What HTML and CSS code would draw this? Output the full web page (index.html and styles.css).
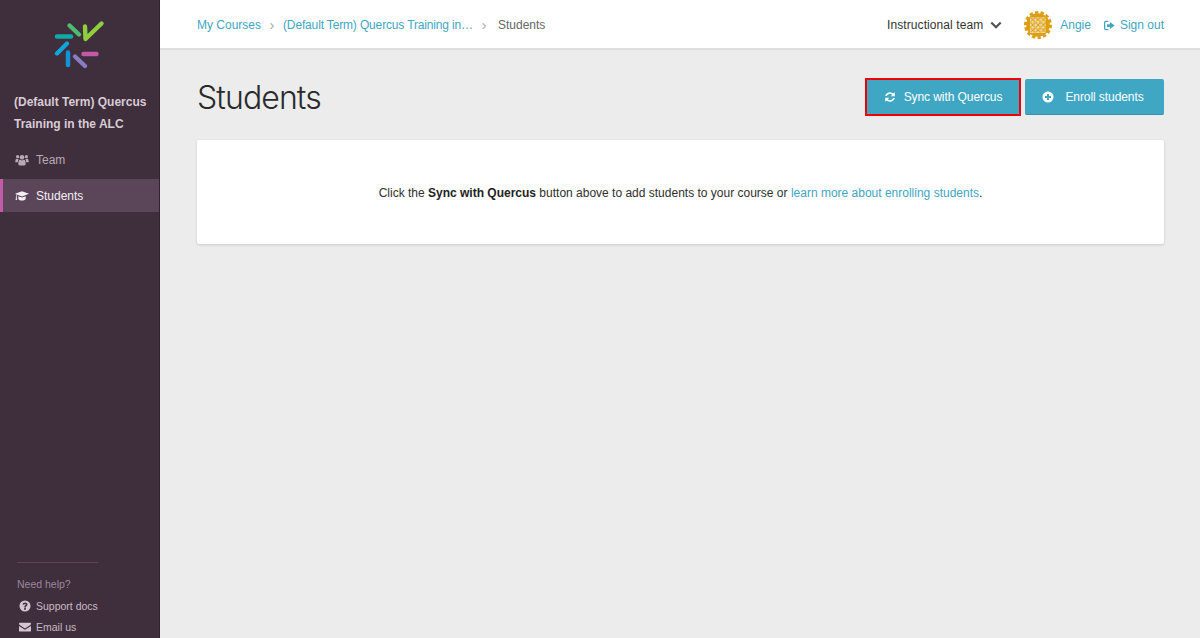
FILE: index.html
```html
<!DOCTYPE html>
<html lang="en">
<head>
    <meta charset="UTF-8">
    <meta name="viewport" content="width=device-width, initial-scale=1.0">
    <title>Students</title>
    <link rel="stylesheet" href="styles.css">
</head>
<body>

    <aside class="sidebar">
        <div class="logo">
            <svg width="50" height="50" viewBox="0 0 50 50" fill="none" stroke-width="4.4" stroke-linecap="round" stroke-linejoin="round">
                <path d="M2 11.500H16" stroke="#12aaa6"/>
                <path d="M14.500 0.500L24 9.500" stroke="#4fbb6f"/>
                <path d="M30 1.500L30.500 14L46.500 -1.500" stroke="#8fce3c"/>
                <path d="M12 18.500L2 28.500" stroke="#12a5dc"/>
                <path d="M13 27.500V40" stroke="#1096d8"/>
                <path d="M20 31.500L30 41" stroke="#8a7cc4"/>
                <path d="M28.500 29H41.500" stroke="#c45aa6"/>
            </svg>
        </div>
        <h2 class="course-title">(Default Term) Quercus Training in the ALC</h2>
        <nav class="side-nav">
            <a class="side-link">
                <svg class="side-icon" viewBox="0 0 16 14"><circle cx="8" cy="3.800" r="2.600"/><circle cx="3" cy="3.200" r="1.800"/><circle cx="13" cy="3.200" r="1.800"/><path d="M0.300 9.500C0.300 6.800 1 5.600 2.200 5.600C3 5.600 3.600 6.100 4.200 6.200C3.500 7.100 3.300 8.300 3.300 9.500H1.300C0.700 9.500 0.300 9.900 0.300 9.500ZM15.700 9.500C15.700 6.800 15 5.600 13.800 5.600C13 5.600 12.400 6.100 11.800 6.200C12.500 7.100 12.700 8.300 12.700 9.500H14.700C15.300 9.500 15.700 9.900 15.700 9.500Z"/><path d="M3.800 11.300C3.800 8.300 4.400 6.700 5.800 6.700C6.500 6.700 7 7.500 8 7.500C9 7.500 9.500 6.700 10.200 6.700C11.600 6.700 12.200 8.300 12.200 11.300C12.200 12.500 11.500 13.200 10.500 13.200H5.500C4.500 13.200 3.800 12.500 3.800 11.300Z"/></svg>
                Team
            </a>
            <a class="side-link active">
                <svg class="side-icon" viewBox="0 0 16 14"><path d="M8 1.500L16 4.500L8 7.500L2.800 5.600C2.300 6 2 6.700 1.900 7.500C2.300 7.700 2.300 8.300 2 8.600L2.400 11.600H0.700L1.100 8.600C0.800 8.300 0.800 7.700 1.200 7.500C1.300 6.500 1.600 5.700 2.100 5.200L0 4.500Z"/><path d="M3.800 7.200L8 8.800L12.200 7.200V10C12.200 11.200 10.300 12.200 8 12.200C5.700 12.200 3.800 11.200 3.800 10Z"/></svg>
                Students
            </a>
        </nav>
        <div class="help">
            <div class="help-title">Need help?</div>
            <a class="help-link">
                <svg class="help-icon" viewBox="0.500 0.500 13 13"><path fill-rule="evenodd" d="M7 1a6 6 0 1 0 0 12A6 6 0 0 0 7 1ZM6.100 9.300H7.900V11H6.100ZM4.400 5.500C4.500 4 5.600 3.100 7.100 3.100C8.600 3.100 9.700 4 9.700 5.300C9.700 6.900 7.900 7 7.900 8.500H6.100C6.100 6.400 7.900 6.200 7.900 5.400C7.900 5 7.500 4.700 7 4.700C6.500 4.700 6.100 5 5.900 5.700Z"/></svg>
                Support docs
            </a>
            <a class="help-link">
                <svg class="help-icon" viewBox="0.500 0.500 13 13"><path d="M0.500 3.500C0.500 2.900 1 2.400 1.600 2.400H12.400C13 2.400 13.500 2.900 13.500 3.500C13.500 4 13.200 4.400 12.800 4.700L7 8.500L1.200 4.700C0.800 4.400 0.500 4 0.500 3.500Z"/><path d="M0.500 5.800L7 10L13.500 5.800V11C13.500 11.600 13 12 12.400 12H1.600C1 12 0.500 11.600 0.500 11Z"/></svg>
                Email us
            </a>
        </div>
    </aside>

    <div class="main">
        <header class="topbar">
            <div class="breadcrumb">
                <a class="crumb">My Courses</a>
                <span class="crumb-sep">›</span>
                <a class="crumb crumb-course">(Default Term) Quercus Training in…</a>
                <span class="crumb-sep">›</span>
                <span class="crumb-current">Students</span>
            </div>
            <div class="user-area">
                <span class="team-select">
                    Instructional team
                    <svg class="chevron" viewBox="0 0 12 8"><path d="M1.300 1.500L6 6.200L10.700 1.500" fill="none" stroke="#555" stroke-width="2.200"/></svg>
                </span>
                <svg class="avatar" viewBox="0 0 28 28">
                    <defs>
                        <pattern id="lattice" x="6" y="6" width="5.330" height="5.330" patternUnits="userSpaceOnUse">
                            <rect width="5.330" height="5.330" fill="#f5e3b4"/>
                            <path d="M0.500 0.500L4.830 4.830M4.830 0.500L0.500 4.830" stroke="#dd9e12" stroke-width="1.100"/>
                            <path d="M0 0H5.330V5.330" fill="none" stroke="#dd9e12" stroke-width="0.800"/>
                        </pattern>
                    </defs>
                    <circle cx="14" cy="14" r="11.800" fill="#dd9e12"/>
                    <circle cx="14" cy="14" r="12.600" fill="none" stroke="#dd9e12" stroke-width="2.800" stroke-dasharray="3.300 2.300"/>
                    <rect x="6" y="6" width="16" height="16" fill="url(#lattice)"/>
                </svg>
                <a class="user-name">Angie</a>
                <a class="sign-out">
                    <svg class="sign-icon" viewBox="0 0 12 12"><path d="M4.800 1.500H2.300C1.300 1.500 0.700 2.100 0.700 3.100V8.900C0.700 9.900 1.300 10.500 2.300 10.500H4.800" fill="none" stroke="#3fa6c4" stroke-width="1.400"/><path d="M6.500 2.300L11.500 6L6.500 9.700V7.500H3.400V4.500H6.500Z" fill="#3fa6c4"/></svg>
                    Sign out
                </a>
            </div>
        </header>

        <main class="content">
            <div class="page-head">
                <h1>Students</h1>
                <div class="actions">
                    <button class="btn btn-marked">
                        <svg class="btn-icon" viewBox="0 0 12 12"><path d="M1.200 5A4.900 4.900 0 0 1 9.300 2.600L10.800 1.200V5.300H6.700L8.200 3.800A3.300 3.300 0 0 0 2.800 5ZM10.800 7A4.900 4.900 0 0 1 2.700 9.400L1.200 10.800V6.700H5.300L3.800 8.200A3.300 3.300 0 0 0 9.200 7Z"/></svg>
                        Sync with Quercus
                    </button>
                    <button class="btn btn-enroll">
                        <svg class="btn-icon" viewBox="0 0 12 12"><path fill-rule="evenodd" d="M6 0.500a5.500 5.500 0 1 0 0 11A5.500 5.500 0 0 0 6 0.500ZM5.100 3H6.900V5.100H9V6.900H6.900V9H5.100V6.900H3V5.100H5.100Z"/></svg>
                        Enroll students
                    </button>
                </div>
            </div>
            <section class="card">
                <p>Click the <strong>Sync with Quercus</strong> button above to add students to your course or <a>learn more about enrolling students</a>.</p>
            </section>
        </main>
    </div>

</body>
</html>
```

FILE: styles.css
```css
* {
    box-sizing: border-box;
}
html, body {
    height: 100%;
}
body {
    margin: 0;
    display: flex;
    height: 638px;
    overflow: hidden;
    background-color: #ececec;
    font-family: 'Liberation Sans', Arial, sans-serif;
    font-size: 12px;
    color: #2e2e2e;
}
a {
    color: #3fa6c4;
}

/* Sidebar */
.sidebar {
    width: 160px;
    flex: none;
    display: flex;
    flex-direction: column;
    background-color: #3f2e3c;
    border-right: 1px solid #2f2430;
    color: #cdbfca;
}
.logo {
    height: 91px;
    padding: 25px 0 0 55px;
}
.logo svg {
    display: block;
    overflow: visible;
}
.course-title {
    margin: 0;
    padding: 0 4px 0 14px;
    font-size: 12px;
    line-height: 22px;
    font-weight: bold;
    color: #d8ccd5;
}
.side-nav {
    margin-top: 8px;
}
.side-link {
    display: flex;
    align-items: center;
    gap: 7px;
    height: 33px;
    margin-bottom: 3px;
    padding-left: 15px;
    color: #b9a9b5;
}
.side-link.active {
    background-color: #5b4558;
    border-left: 3px solid #c25ca6;
    padding-left: 12px;
    color: #f4eff3;
}
.side-icon {
    width: 14px;
    height: 14px;
    fill: currentColor;
}
.help {
    margin: auto 0 0 17px;
    width: 81px;
    border-top: 1px solid #5b4558;
    padding-top: 13px;
    height: 76px;
    font-size: 10.500px;
}
.help-title {
    color: #9c8799;
    line-height: 16px;
    margin-bottom: 3px;
}
.help-link {
    display: flex;
    align-items: center;
    gap: 5px;
    height: 21px;
    color: #c9bac6;
    white-space: nowrap;
    margin-left: 2px;
}
.help-icon {
    width: 12px;
    height: 12px;
    fill: #d4c5d0;
}

/* Top bar */
.main {
    flex: 1;
    min-width: 0;
    display: flex;
    flex-direction: column;
}
.topbar {
    height: 50px;
    flex: none;
    display: flex;
    align-items: center;
    justify-content: space-between;
    padding: 2px 36px 0 37px;
    background-color: white;
    border-bottom: 2px solid #dedede;
}
.breadcrumb {
    display: flex;
    align-items: center;
}
.crumb {
    color: #3fa6c4;
}
.crumb-course {
    letter-spacing: -0.150px;
}
.crumb-sep {
    width: 22px;
    text-align: center;
    color: #aaa;
    font-size: 15px;
    line-height: 14px;
}
.crumb-current {
    margin-left: 3px;
    color: #666;
}
.user-area {
    display: flex;
    align-items: center;
}
.team-select {
    display: flex;
    align-items: center;
    color: #333;
    letter-spacing: 0.080px;
}
.chevron {
    width: 12px;
    height: 8px;
    margin-left: 7px;
}
.avatar {
    width: 28px;
    height: 28px;
    margin-left: 22px;
}
.user-name {
    margin-left: 8px;
}
.sign-out {
    display: flex;
    align-items: center;
    gap: 5px;
    margin-left: 13px;
}
.sign-icon {
    width: 11px;
    height: 11px;
}

/* Content */
.content {
    padding: 28px 36px 0 37px;
}
.page-head {
    display: flex;
    justify-content: space-between;
    align-items: center;
    height: 38px;
}
h1 {
    margin: 0;
    font-size: 32px;
    font-weight: 300;
    font-family: Inter, 'Liberation Sans', sans-serif;
    letter-spacing: -0.900px;
    color: #2a2a2a;
}
.actions {
    display: flex;
    align-items: center;
    gap: 4px;
}
.btn {
    display: flex;
    align-items: center;
    justify-content: center;
    gap: 8px;
    height: 36px;
    width: 139px;
    border: none;
    border-bottom: 1px solid #3793ad;
    border-radius: 2px;
    background-color: #3fa6c4;
    color: white;
    font-family: inherit;
    font-size: 12px;
    letter-spacing: -0.080px;
    padding: 0;
}
.btn-marked {
    width: 156px;
    height: 38px;
    border: 2px solid #f00000;
    border-radius: 0;
}
.btn-enroll {
    gap: 11px;
    padding-right: 3px;
}
.btn-icon {
    width: 12px;
    height: 12px;
    fill: white;
}
.card {
    margin-top: 24px;
    height: 104px;
    display: flex;
    align-items: center;
    justify-content: center;
    background-color: white;
    border-radius: 2px;
    box-shadow: 0 1px 3px rgba(0, 0, 0, 0.15);
}
.card p {
    margin: 0;
    padding-top: 1px;
}
.card strong {
    color: #222;
}
```
